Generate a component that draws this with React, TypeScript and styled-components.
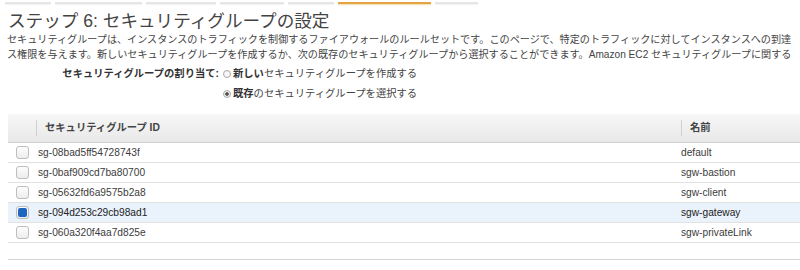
import React from 'react';
import styled, { createGlobalStyle } from 'styled-components';

const GlobalStyle = createGlobalStyle`
  body {
    margin: 0;
    background: #fff;
    overflow: hidden;
    font-family: "Liberation Sans", "Noto Sans CJK JP", sans-serif;
    color: #444;
  }
`;

const Page = styled.div`
  width: 800px;
  height: 270px;
  overflow: hidden;
  padding-top: 2px;
  box-sizing: border-box;
`;

const StepBar = styled.div`
  display: flex;
  gap: 4px;
  margin-left: 5px;
  height: 3px;
`;

const StepSegment = styled.div<{ $w: number; $active?: boolean }>`
  width: ${(p) => p.$w}px;
  height: 2px;
  background: ${(p) => (p.$active ? '#e3a443' : '#e6e6e6')};
  box-shadow: ${(p) => (p.$active ? '0 1px 1px rgba(240, 190, 90, 0.5)' : '0 1px 0 #f2f2f2')};
`;

const Title = styled.h1`
  margin: 6px 0 0 8px;
  font-size: 17.6px;
  line-height: 21px;
  font-weight: normal;
  color: #444;
  white-space: nowrap;
`;

const Description = styled.p`
  margin: 0 0 0 7px;
  font-size: 10.12px;
  line-height: 15px;
  color: #444;
  white-space: nowrap;
`;

const AssignRow = styled.div`
  display: grid;
  grid-template-columns: 219px auto;
  column-gap: 4px;
  margin-top: 2px;
`;

const AssignLabel = styled.div`
  text-align: right;
  font-weight: bold;
  font-size: 10.3px;
  line-height: 20px;
  color: #333;
`;

const Options = styled.div`
  display: flex;
  flex-direction: column;
`;

const Option = styled.label`
  display: flex;
  align-items: center;
  gap: 2px;
  font-size: 10.3px;
  line-height: 20px;
  color: #444;

  b {
    color: #333;
  }
`;

const Radio = styled.span<{ $checked?: boolean }>`
  width: 6px;
  height: 6px;
  border-radius: 50%;
  border: 1px solid #a8a8a8;
  background: ${(p) => (p.$checked ? 'radial-gradient(circle, #555 0 1.5px, #f3f3f3 2px)' : '#f6f6f6')};
`;

const Table = styled.div`
  margin: 10px 0 0 8px;
  width: 830px;
`;

const HeaderRow = styled.div`
  display: grid;
  grid-template-columns: 28px 645px 1fr;
  height: 28px;
  align-items: center;
  background: linear-gradient(#f7f7f7, #e9e9e9);
  border-bottom: 1px solid #cfcfcf;
`;

const HeaderCell = styled.div<{ $sep?: boolean }>`
  font-size: 10.3px;
  font-weight: bold;
  color: #444;
  padding-left: 8px;
  line-height: 16px;
  border-left: ${(p) => (p.$sep ? '1px solid #d0d0d0' : 'none')};
`;

const Row = styled.div<{ $selected?: boolean }>`
  display: grid;
  grid-template-columns: 30px 643px 1fr;
  height: 19px;
  align-items: center;
  border-bottom: 1px solid #e2e2e2;
  background: ${(p) => (p.$selected ? '#eaf2fc' : '#fff')};
  font-size: 10.2px;
  color: ${(p) => (p.$selected ? '#222' : '#3c3c3c')};
`;

const CheckCell = styled.div`
  display: flex;
  align-items: center;
  padding-left: 8px;
`;

const Checkbox = styled.span<{ $checked?: boolean }>`
  position: relative;
  width: 11px;
  height: 11px;
  border: 1px solid #bdbdbd;
  border-radius: 3px;
  background: linear-gradient(#fdfdfd, #ececec);

  &::after {
    content: '';
    display: ${(p) => (p.$checked ? 'block' : 'none')};
    position: absolute;
    left: 1px;
    top: 1px;
    width: 9px;
    height: 9px;
    border-radius: 2px;
    background: #1f66c1;
  }
`;

const Footer = styled.div`
  margin-top: 16px;
  border-top: 1px solid #d4d4d4;
`;

const steps = [
  { w: 46 },
  { w: 87 },
  { w: 70 },
  { w: 64 },
  { w: 46 },
  { w: 93, active: true },
  { w: 43 },
];

const groups = [
  { id: 'sg-08bad5ff54728743f', name: 'default' },
  { id: 'sg-0baf909cd7ba80700', name: 'sgw-bastion' },
  { id: 'sg-05632fd6a9575b2a8', name: 'sgw-client' },
  { id: 'sg-094d253c29cb98ad1', name: 'sgw-gateway', selected: true },
  { id: 'sg-060a320f4aa7d825e', name: 'sgw-privateLink' },
];

const App = () => {
  return (
    <Page>
      <GlobalStyle />
      <StepBar>
        {steps.map((s, i) => (
          <StepSegment key={i} $w={s.w} $active={s.active} />
        ))}
      </StepBar>
      <Title>ステップ 6: セキュリティグループの設定</Title>
      <Description>
        セキュリティグループは、インスタンスのトラフィックを制御するファイアウォールのルールセットです。このページで、特定のトラフィックに対してインスタンスへの到達
      </Description>
      <Description>
        ス権限を与えます。新しいセキュリティグループを作成するか、次の既存のセキュリティグループから選択することができます。Amazon EC2 セキュリティグループに関する
      </Description>
      <AssignRow>
        <AssignLabel>セキュリティグループの割り当て:</AssignLabel>
        <Options>
          <Option>
            <Radio />
            <span>
              <b>新しい</b>セキュリティグループを作成する
            </span>
          </Option>
          <Option>
            <Radio $checked />
            <span>
              <b>既存</b>のセキュリティグループを選択する
            </span>
          </Option>
        </Options>
      </AssignRow>
      <Table>
        <HeaderRow>
          <div />
          <HeaderCell $sep>セキュリティグループ ID</HeaderCell>
          <HeaderCell $sep>名前</HeaderCell>
        </HeaderRow>
        {groups.map((g) => (
          <Row key={g.id} $selected={g.selected}>
            <CheckCell>
              <Checkbox $checked={g.selected} />
            </CheckCell>
            <div>{g.id}</div>
            <div>{g.name}</div>
          </Row>
        ))}
        <Footer />
      </Table>
    </Page>
  );
};

export default App;
